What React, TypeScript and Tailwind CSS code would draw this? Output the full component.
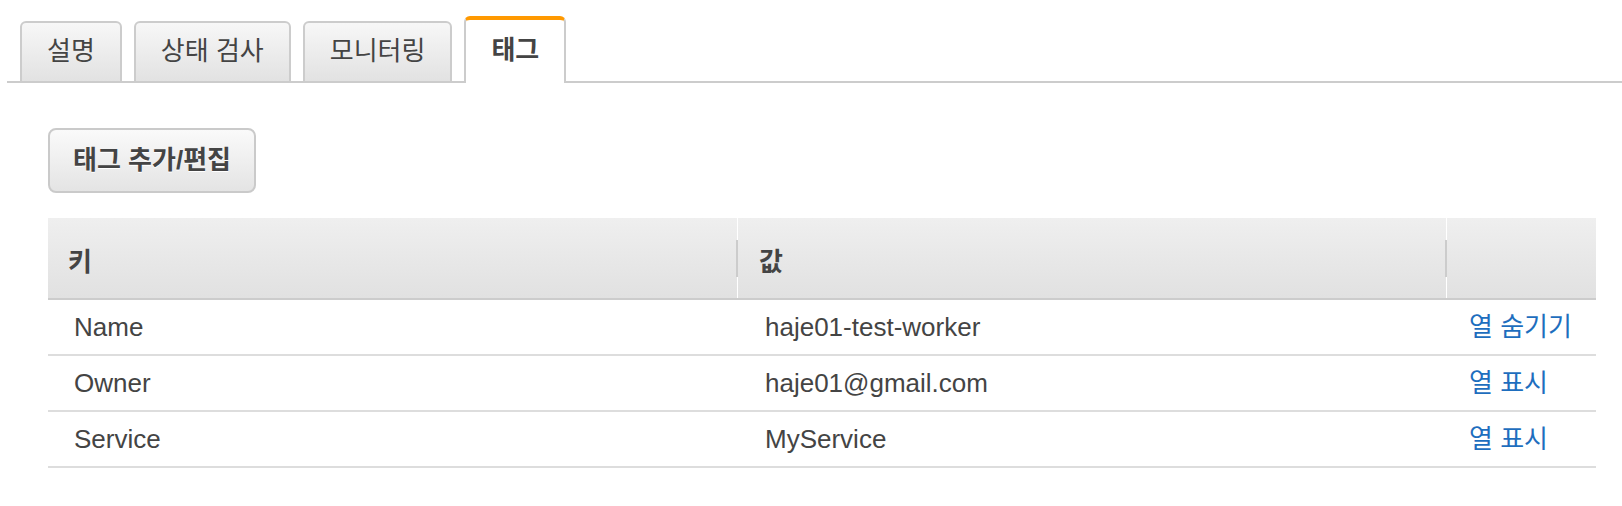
import React from "react";

const tabs = [
  { label: "설명", active: false },
  { label: "상태 검사", active: false },
  { label: "모니터링", active: false },
  { label: "태그", active: true },
];

const rows = [
  { key: "Name", value: "haje01-test-worker", action: "열 숨기기" },
  { key: "Owner", value: "haje01@gmail.com", action: "열 표시" },
  { key: "Service", value: "MyService", action: "열 표시" },
];

const font = { fontFamily: '"Liberation Sans", "Noto Sans CJK KR", sans-serif' };

export default function App() {
  return (
    <div className="w-[1622px] h-[506px] bg-white text-[#444] text-[26px]" style={font}>
      {/* tabs */}
      <div className="pl-[7px] pt-[16px]">
        <div className="flex items-end gap-[12px] pl-[13px] h-[67px] border-b-2 border-[#cccccc]">
          {tabs.map((t) =>
            t.active ? (
              <div
                key={t.label}
                className="-mb-[2px] h-[67px] px-[25px] flex items-center justify-center bg-white border-2 border-b-0 border-[#cccccc] border-t-[4px] border-t-[#ff9900] rounded-t-[6px] font-bold text-[#444] pb-[2px]"
              >
                {t.label}
              </div>
            ) : (
              <div
                key={t.label}
                className="-mb-[2px] h-[62px] px-[25px] flex items-center justify-center bg-gradient-to-b from-[#f7f7f7] to-[#e2e2e2] border-2 border-[#cccccc] rounded-t-[6px] pb-[2px]"
              >
                {t.label}
              </div>
            )
          )}
        </div>
      </div>

      <div className="pl-[48px] pr-[26px]">
        {/* button */}
        <button
          type="button"
          className="mt-[45px] w-[208px] h-[65px] rounded-[8px] border-2 border-[#cacaca] bg-gradient-to-b from-[#fafafa] to-[#e4e4e4] font-bold text-[#444] [text-shadow:0_1px_0_#ffffff]"
        >
          태그 추가/편집
        </button>

        {/* table */}
        <div className="mt-[25px] w-[1548px]">
          <div className="flex h-[82px] border-b-2 border-[#cccccc] bg-gradient-to-b from-[#efefef] to-[#e1e1e1] font-bold">
            <div className="w-[689px] flex items-center pl-[20px] pt-[8px]">키</div>
            <div className="w-[709px] flex items-center border-l border-white relative">
              <span className="absolute -left-[2px] top-[22px] h-[37px] w-[2px] bg-[#cccccc]" />
              <span className="pl-[21px] pt-[8px]">값</span>
            </div>
            <div className="flex-1 flex items-center border-l border-white relative">
              <span className="absolute -left-[2px] top-[22px] h-[37px] w-[2px] bg-[#cccccc]" />
            </div>
          </div>
          {rows.map((r) => (
            <div key={r.key} className="flex h-[56px] border-b-2 border-[#dddddd] items-center">
              <div className="w-[689px] pl-[26px]">{r.key}</div>
              <div className="w-[709px] pl-[28px]">{r.value}</div>
              <div className="flex-1 pl-[23px] text-[#1e6ebe]">{r.action}</div>
            </div>
          ))}
        </div>
      </div>
    </div>
  );
}
